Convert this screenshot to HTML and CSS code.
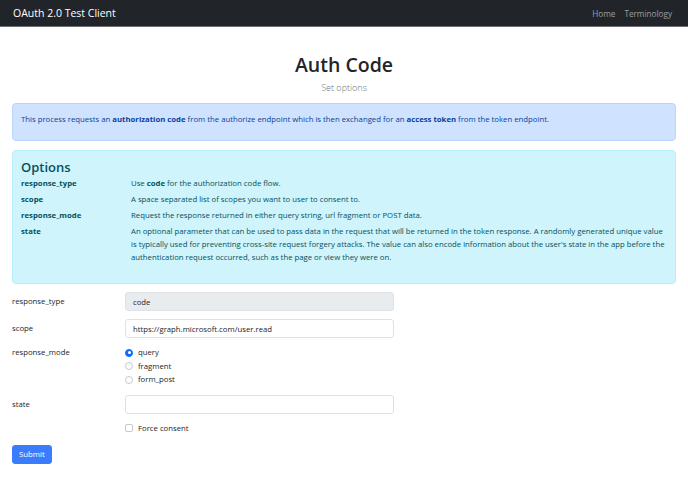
FILE: index.html
```html
<!DOCTYPE html>
<html lang="en">
<head>
<meta charset="utf-8">
<title>Auth Code - OAuth 2.0 Test Client</title>
<link rel="stylesheet" href="styles.css">
</head>
<body>
<nav class="navbar">
  <a class="brand" href="#">OAuth 2.0 Test Client</a>
  <div class="nav-links">
    <a href="#">Home</a>
    <a href="#">Terminology</a>
  </div>
</nav>
<main class="container">
  <header class="page-head">
    <h1>Auth Code</h1>
    <p class="lead">Set options</p>
  </header>
  <div class="alert alert-primary">
    <p>This process requests an <b>authorization code</b> from the authorize endpoint which is then exchanged for an <b>access token</b> from the token endpoint.</p>
  </div>
  <div class="alert alert-info">
    <h4>Options</h4>
    <dl class="opts">
      <dt>response_type</dt>
      <dd>Use <b>code</b> for the authorization code flow.</dd>
      <dt>scope</dt>
      <dd>A space separated list of scopes you want to user to consent to.</dd>
      <dt>response_mode</dt>
      <dd>Request the response returned in either query string, url fragment or POST data.</dd>
      <dt>state</dt>
      <dd>An optional parameter that can be used to pass data in the request that will be returned in the token response. A randomly generated unique value is typically used for preventing cross-site request forgery attacks. The value can also encode information about the user's state in the app before the authentication request occurred, such as the page or view they were on.</dd>
    </dl>
  </div>
  <form class="form">
    <div class="frow">
      <label class="flabel">response_type</label>
      <input class="finput" type="text" value="code" disabled>
    </div>
    <div class="frow">
      <label class="flabel">scope</label>
      <input class="finput" type="text" value="https://graph.microsoft.com/user.read">
    </div>
    <div class="frow frow-top">
      <span class="flabel">response_mode</span>
      <div class="radios">
        <label class="check"><span class="radio on"></span>query</label>
        <label class="check"><span class="radio"></span>fragment</label>
        <label class="check"><span class="radio"></span>form_post</label>
      </div>
    </div>
    <div class="frow">
      <label class="flabel">state</label>
      <input class="finput" type="text" value="">
    </div>
    <div class="frow">
      <span class="flabel"></span>
      <label class="check"><span class="box"></span>Force consent</label>
    </div>
    <button class="btn" type="button">Submit</button>
  </form>
</main>
</body>
</html>
```
FILE: styles.css
```css
* { box-sizing: border-box; }
html, body { margin: 0; padding: 0; }
body {
  font-family: "Open Sans", "Noto Sans", sans-serif;
  font-size: 7.75px;
  line-height: 13px;
  color: #212529;
  background: #fff;
}
a { text-decoration: none; }

.navbar {
  height: 27px;
  background: #212529;
  border-bottom: 1px solid #6c6f73;
  display: flex;
  align-items: center;
  justify-content: space-between;
  padding: 0 16px 0 13px;
}
.brand { color: #fff; font-size: 10.5px; }
.nav-links { display: flex; gap: 9px; }
.nav-links a { color: rgba(255,255,255,.55); font-size: 8.2px; }

.container { padding: 0 12px; }
.page-head { text-align: center; padding-top: 23px; }
.page-head h1 {
  margin: 0;
  font-size: 19.5px;
  line-height: 30px;
  font-weight: 600;
}
.lead { margin: 1px 0 0; font-size: 9px; line-height: 14px; color: #6c757d; font-weight: 300; }

.alert {
  border: 1px solid;
  border-radius: 4px;
  padding: 8px 8px;
  margin: 0 0 9px;
}
.alert-primary { margin-top: 8px; background: #cfe2ff; border-color: #b6d4fe; color: #084298; height: 38px; padding-top: 9px; }
.alert-primary p { margin: 0; }
.alert b { font-weight: 700; }
.alert-info { background: #cff4fc; border-color: #b6effb; color: #055160; height: 134px; padding-top: 8px; margin-bottom: 8px; }
.alert-info h4 { margin: 0 0 2px; font-size: 13px; line-height: 16px; font-weight: 600; }
.opts {
  margin: 0;
  display: grid;
  grid-template-columns: 110px 1fr;
  row-gap: 3px;
}
.opts dt { font-weight: 700; }
.opts dd { margin: 0; }

.frow {
  display: grid;
  grid-template-columns: 113px 269px;
  align-items: center;
  margin-bottom: 8px;
}
.frow-top { align-items: start; margin-top: 1px; }
.flabel { color: #212529; }
.finput {
  height: 19px;
  border: 1px solid #dee2e6;
  border-radius: 3px;
  padding: 0 7px;
  font: inherit;
  color: #212529;
  background: #fff;
}
.finput:disabled { background: #e9ecef; }
.radios { display: flex; flex-direction: column; }
.check { display: flex; align-items: center; gap: 5px; height: 13.5px; }
.radio {
  width: 8px; height: 8px; border-radius: 50%;
  border: 1px solid #c6cacf; background: #fff;
}
.radio.on { background: #0d6efd; border-color: #0d6efd; position: relative; }
.radio.on::after {
  content: ""; position: absolute; left: 1.5px; top: 1.5px; width: 3px; height: 3px; border-radius: 50%; background: #fff;
}
.box { width: 8px; height: 8px; border-radius: 2px; border: 1px solid #c6cacf; background: #fff; }
.btn {
  margin-top: 2px;
  font: inherit;
  color: #fff;
  background: #3a7cfc;
  border: 1px solid #3a7cfc;
  border-radius: 3px;
  height: 19px;
  padding: 0 6px;
}
```
